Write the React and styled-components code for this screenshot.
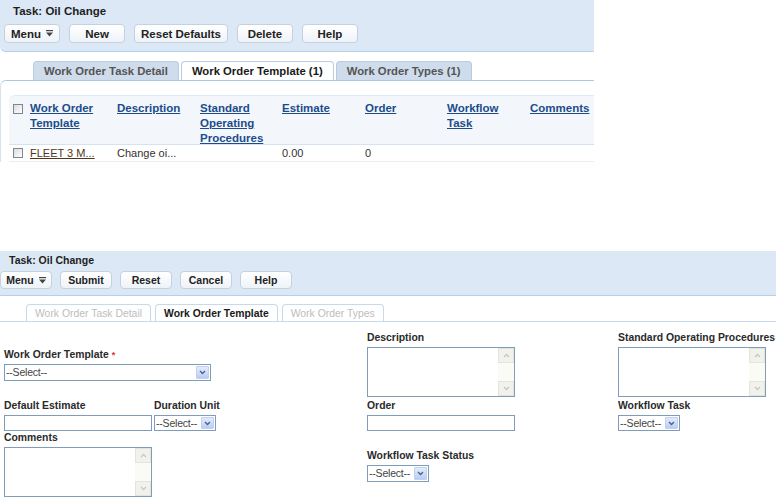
import React from "react";
import styled, { createGlobalStyle } from "styled-components";

const GlobalStyle = createGlobalStyle`
    html, body {
        margin: 0;
        padding: 0;
        background: #fff;
    }
    body {
        font-family: "Liberation Sans", Arial, sans-serif;
        color: #222;
    }
`

const Page = styled.div`
    width: 776px;
    height: 500px;
    overflow: hidden;
    display: flex;
    flex-direction: column;
`

/* ---------- top (list) view ---------- */

const ListView = styled.section`
    width: 594px;
    height: 251px;
`

const Toolbar = styled.div`
    background: #dce8f5;
    border-bottom: 1px solid #b7d0ea;
    border-bottom-left-radius: ${p => p.$rounded ? "6px" : "0"};
    padding: ${p => p.$compact ? "3px 0 6px 0" : "4px 0 8px 4px"};
`

const Title = styled.div`
    font-weight: bold;
    font-size: ${p => p.$small ? "10.5px" : "11.5px"};
    line-height: ${p => p.$small ? "13px" : "14px"};
    margin-left: 9px;
    color: #1e1e1e;
`

const ButtonRow = styled.div`
    display: flex;
    gap: ${p => p.$compact ? "8px" : "9px"};
    margin-top: ${p => p.$compact ? "4px" : "6px"};
`

const Button = styled.button`
    height: ${p => p.$compact ? "18px" : "19px"};
    min-width: ${p => p.$compact ? "52px" : "56px"};
    padding: 0 ${p => p.$compact ? "5px" : "6px"};
    box-sizing: border-box;
    border: 1px solid #c4d2df;
    border-radius: 4px;
    background: linear-gradient(#ffffff, #eef3f8);
    font-family: "Liberation Sans", Arial, sans-serif;
    font-weight: bold;
    font-size: ${p => p.$compact ? "10.5px" : "11.5px"};
    color: #222;
    display: flex;
    align-items: center;
    justify-content: center;
    gap: 5px;
    cursor: pointer;
`

const Tabs = styled.div`
    display: flex;
    gap: ${p => p.$compact ? "4px" : "2px"};
    padding-left: ${p => p.$compact ? "26px" : "33px"};
    margin-top: ${p => p.$compact ? "8px" : "9px"};
`

const Tab = styled.div`
    height: ${p => p.$compact ? "17px" : "19px"};
    box-sizing: border-box;
    padding: 0 ${p => p.$compact ? "8px" : "10px"};
    border: 1px solid ${p => p.$compact ? "#c9d9e8" : "#b8cde2"};
    border-bottom: none;
    border-radius: 4px 4px 0 0;
    display: flex;
    align-items: center;
    font-size: ${p => p.$compact ? "10.4px" : "11.3px"};
    font-weight: ${p => p.$disabled ? "normal" : "bold"};
    background: ${p => p.$active ? "#fff" : p.$compact ? "#fff" : "#cfdcec"};
    color: ${p => p.$disabled ? "#bdbdbd" : p.$active ? "#1a1a1a" : "#555"};
    white-space: nowrap;
`

const TabBody = styled.div`
    border-top: 1px solid #a9c9e8;
    border-left: 1px solid #d3e3f2;
    border-top-left-radius: 6px;
    padding: 14px 0 0 8px;
`

const Table = styled.div`
    display: grid;
    grid-template-columns: 21px 87px 83px 82px 83px 82px 83px 1fr;
`

const HeadCell = styled.div`
    background: #f3f7fb;
    border-top: 1px solid #e0eaf3;
    border-bottom: 1px solid #d6e3ef;
    height: 50px;
    box-sizing: border-box;
    padding-top: 5px;
    font-size: 11.5px;
    line-height: 15px;
    font-weight: bold;
    &:first-child {
        border-top-left-radius: 6px;
        padding-left: 4px;
        padding-top: 7px;
    }
`

const HeadLink = styled.a`
    color: #1c4c8c;
    text-decoration: underline;
    cursor: pointer;
`

const Cell = styled.div`
    height: 16px;
    border-bottom: 1px solid #e6edf4;
    font-size: 11px;
    line-height: 16px;
    color: #333;
    white-space: nowrap;
    padding-left: ${p => p.$check ? "4px" : "0"};
    display: ${p => p.$check ? "flex" : "block"};
    align-items: center;
`

const RowLink = styled.a`
    color: #4f3719;
    text-decoration: underline;
`

const Check = styled.span`
    display: inline-block;
    width: 10px;
    height: 10px;
    box-sizing: border-box;
    border: 1px solid #7d8893;
    background: linear-gradient(135deg, #dcdcdc, #ffffff);
`

/* ---------- bottom (edit) view ---------- */

const EditView = styled.section`
    width: 776px;
    flex: 1;
`

const TabLine = styled.div`
    border-top: 1px solid #c6daee;
`

const Form = styled.div`
    display: grid;
    grid-template-columns: 363px 251px 1fr;
    padding: 9px 0 0 4px;
`

const Column = styled.div`
    display: flex;
    flex-direction: column;
    align-items: flex-start;
    padding-top: ${p => p.$offset || 0}px;
`

const FieldRow = styled.div`
    display: flex;
    gap: 2px;
    margin-top: ${p => p.$space || 0}px;
`

const Field = styled.div`
    display: flex;
    flex-direction: column;
    margin-top: ${p => p.$space || 0}px;
`

const Label = styled.label`
    font-size: 10.4px;
    line-height: 14px;
    font-weight: bold;
    color: #2a2a2a;
    margin-bottom: 2px;
    white-space: nowrap;
`

const Req = styled.span`
    color: #e03030;
    font-size: 9px;
    margin-left: 3px;
    vertical-align: top;
`

const TextInput = styled.div`
    width: ${p => p.$w}px;
    height: 16px;
    box-sizing: border-box;
    border: 1px solid #7f9db9;
    background: #fff;
`

const SelectBox = styled.div`
    width: ${p => p.$w}px;
    height: ${p => p.$h || 17}px;
    box-sizing: border-box;
    border: 1px solid #7f9db9;
    background: #fff;
    display: flex;
    align-items: stretch;
    font-size: 10.5px;
    color: #444;
`

const SelectText = styled.span`
    flex: 1;
    padding-left: 1px;
    line-height: ${p => (p.$h || 17) - 2}px;
    white-space: nowrap;
    letter-spacing: -0.2px;
`

const SelectArrow = styled.span`
    width: 13px;
    flex: none;
    margin: 1px;
    border-radius: 1px;
    background: linear-gradient(#e3ecfd, #b9cdf4);
    border: 1px solid #bfd0f0;
    box-sizing: border-box;
    display: flex;
    align-items: center;
    justify-content: center;
`

const TextArea = styled.div`
    width: 148px;
    height: 50px;
    box-sizing: border-box;
    border: 1px solid #7f9db9;
    background: #fff;
    display: flex;
    justify-content: flex-end;
`

const ScrollTrack = styled.div`
    width: 16px;
    background: #fbfbf5;
    display: flex;
    flex-direction: column;
    justify-content: space-between;
`

const ScrollBtn = styled.div`
    height: 15px;
    box-sizing: border-box;
    border: 1px solid #e4e4dc;
    background: #f2f2ec;
    display: flex;
    align-items: center;
    justify-content: center;
`

function MenuIcon() {
    return (
        <svg width="7" height="7" viewBox="0 0 7 7">
            <rect x="0" y="0" width="7" height="1.2" fill="#444" />
            <path d="M0 2.6 H7 L3.5 6.5 Z" fill="#444" />
        </svg>
    )
}

function Chevron({ up, color = "#4a5f8a" }) {
    return (
        <svg width="7" height="5" viewBox="0 0 7 5">
            <path d={up ? "M1 4 L3.5 1.5 L6 4" : "M1 1 L3.5 3.5 L6 1"} fill="none" stroke={color} strokeWidth="1.3" />
        </svg>
    )
}

function Select({ w, h, text = "--Select--" }) {
    return (
        <SelectBox $w={w} $h={h}>
            <SelectText $h={h}>{text}</SelectText>
            <SelectArrow><Chevron /></SelectArrow>
        </SelectBox>
    )
}

function Memo() {
    return (
        <TextArea>
            <ScrollTrack>
                <ScrollBtn><Chevron up color="#c8c8c0" /></ScrollBtn>
                <ScrollBtn><Chevron color="#c8c8c0" /></ScrollBtn>
            </ScrollTrack>
        </TextArea>
    )
}

const columns = [
    ["Work Order", "Template"],
    ["Description"],
    ["Standard", "Operating", "Procedures"],
    ["Estimate"],
    ["Order"],
    ["Workflow", "Task"],
    ["Comments"],
]

const row = ["FLEET 3 M...", "Change oi...", "", "0.00", "0", "", ""]

export default function App() {
    return (
        <Page>
            <GlobalStyle />
            <ListView>
                <Toolbar $rounded>
                    <Title>Task: Oil Change</Title>
                    <ButtonRow>
                        <Button>Menu <MenuIcon /></Button>
                        <Button>New</Button>
                        <Button>Reset Defaults</Button>
                        <Button>Delete</Button>
                        <Button>Help</Button>
                    </ButtonRow>
                </Toolbar>
                <Tabs>
                    <Tab>Work Order Task Detail</Tab>
                    <Tab $active>Work Order Template (1)</Tab>
                    <Tab>Work Order Types (1)</Tab>
                </Tabs>
                <TabBody>
                    <Table>
                        <HeadCell><Check /></HeadCell>
                        {columns.map((lines, i) => (
                            <HeadCell key={i}>
                                {lines.map((l, j) => (
                                    <div key={j}><HeadLink>{l}</HeadLink></div>
                                ))}
                            </HeadCell>
                        ))}
                        <Cell $check><Check /></Cell>
                        {row.map((v, i) => (
                            <Cell key={i}>{i === 0 ? <RowLink>{v}</RowLink> : v}</Cell>
                        ))}
                    </Table>
                </TabBody>
            </ListView>

            <EditView>
                <Toolbar $compact>
                    <Title $small>Task: Oil Change</Title>
                    <ButtonRow $compact>
                        <Button $compact>Menu <MenuIcon /></Button>
                        <Button $compact>Submit</Button>
                        <Button $compact>Reset</Button>
                        <Button $compact>Cancel</Button>
                        <Button $compact>Help</Button>
                    </ButtonRow>
                </Toolbar>
                <Tabs $compact>
                    <Tab $compact $disabled>Work Order Task Detail</Tab>
                    <Tab $compact $active>Work Order Template</Tab>
                    <Tab $compact $disabled>Work Order Types</Tab>
                </Tabs>
                <TabLine />
                <Form>
                    <Column $offset={17}>
                        <Field>
                            <Label>Work Order Template<Req>*</Req></Label>
                            <Select w={207} />
                        </Field>
                        <FieldRow $space={18}>
                            <Field>
                                <Label>Default Estimate</Label>
                                <TextInput $w={148} />
                            </Field>
                            <Field>
                                <Label>Duration Unit</Label>
                                <Select w={62} h={16} />
                            </Field>
                        </FieldRow>
                        <Field>
                            <Label>Comments</Label>
                            <Memo />
                        </Field>
                    </Column>
                    <Column>
                        <Field>
                            <Label>Description</Label>
                            <Memo />
                        </Field>
                        <Field $space={2}>
                            <Label>Order</Label>
                            <TextInput $w={148} />
                        </Field>
                        <Field $space={18}>
                            <Label>Workflow Task Status</Label>
                            <Select w={62} />
                        </Field>
                    </Column>
                    <Column>
                        <Field>
                            <Label>Standard Operating Procedures</Label>
                            <Memo />
                        </Field>
                        <Field $space={2}>
                            <Label>Workflow Task</Label>
                            <Select w={62} h={16} />
                        </Field>
                    </Column>
                </Form>
            </EditView>
        </Page>
    )
}
